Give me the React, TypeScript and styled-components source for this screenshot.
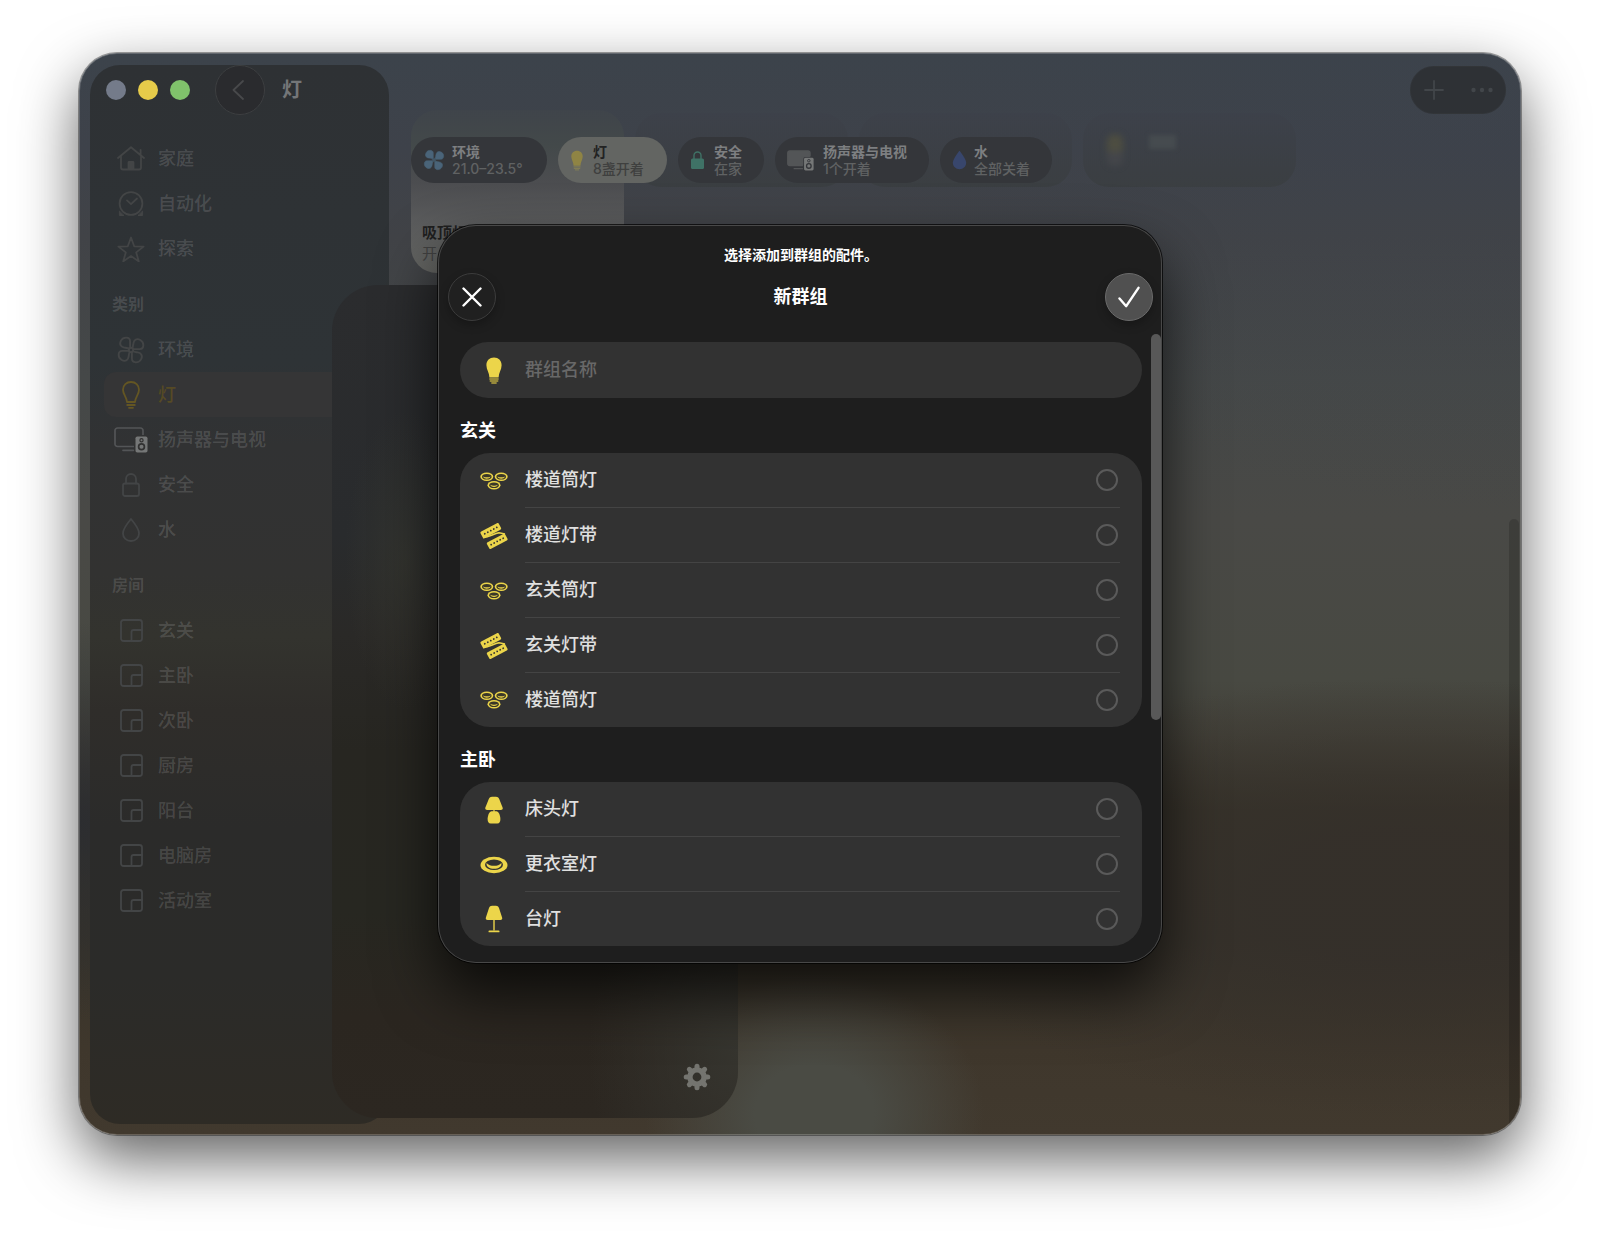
import React from "react";
import styled, { createGlobalStyle, css } from "styled-components";

const GlobalStyle = createGlobalStyle`
  * { box-sizing: border-box; }
  body {
    margin: 0;
    background: #ffffff;
    font-family: Inter, "Noto Sans CJK SC", sans-serif;
    -webkit-font-smoothing: antialiased;
  }
  button, input { font: inherit; color: inherit; }
  ul { list-style: none; margin: 0; padding: 0; }
`;

const YELLOW = "#ecd54a";

/* ---------- window ---------- */

const Page = styled.div`
  min-height: 100vh;
  padding: 53px 79px 104px;
  display: flex;
`;

const WindowShadow = styled.div`
  flex: 1;
  display: flex;
  border-radius: 38px;
  box-shadow:
    0 0 0 1px rgba(0, 0, 0, 0.35),
    0 24px 60px rgba(0, 0, 0, 0.62);
`;

const Window = styled.div`
  position: relative;
  flex: 1;
  display: flex;
  padding: 12px 0 11px 11px;
  border-radius: 38px;
  overflow: hidden;
  background:
    radial-gradient(ellipse 170px 140px at 51% 98%, #4a4b44 35%, rgba(74, 75, 68, 0) 100%),
    radial-gradient(ellipse 200px 200px at 0% 71%, rgba(42, 44, 49, 0.85), rgba(42, 44, 49, 0)),
    radial-gradient(ellipse 500px 220px at 92% 78%, rgba(52, 47, 42, 0.8) 30%, rgba(52, 47, 42, 0)),
    radial-gradient(ellipse 700px 460px at 100% 0%, rgba(60, 66, 76, 0.4), rgba(60, 66, 76, 0)),
    linear-gradient(
      180deg,
      #3c434b 0%,
      #3e424a 9%,
      #414347 17%,
      #454848 30%,
      #494946 43%,
      #484942 58%,
      #44423a 63%,
      #38342a 70%,
      #37332a 82%,
      #3f372c 92%,
      #41392e 100%
    );
`;

const WindowEdge = styled.div`
  position: absolute;
  inset: 0;
  border: 1px solid rgba(255, 255, 255, 0.2);
  border-radius: 38px;
  pointer-events: none;
`;

/* ---------- sidebar ---------- */

const Sidebar = styled.aside`
  flex: none;
  width: 299px;
  border-radius: 30px;
  background: linear-gradient(
    180deg,
    #2e3134 0%,
    #2e3336 28%,
    #313233 36%,
    #323231 48%,
    #33332e 54%,
    #2f2d2a 61%,
    #2b2b2a 72%,
    #2b2b29 86%,
    #2e2b25 100%
  );
`;

const TitleBar = styled.header`
  display: flex;
  align-items: center;
  height: 50px;
  padding-left: 16px;
  margin-bottom: 21px;
`;

const Lights = styled.div`
  display: flex;
  gap: 12px;
`;

const Light = styled.button<{ $color: string }>`
  width: 20px;
  height: 20px;
  padding: 0;
  border: 0;
  border-radius: 50%;
  background: ${(p) => p.$color};
`;

const BackButton = styled.button`
  display: grid;
  place-items: center;
  width: 50px;
  height: 50px;
  margin: 0 17px 0 25px;
  padding: 0 4px 0 0;
  border: 1px solid #3d3f41;
  border-radius: 50%;
  background: #2a2b2e;
  color: #48494b;
`;

const PageTitle = styled.h1`
  margin: 0;
  font-size: 20px;
  line-height: 24px;
  font-weight: 700;
  color: #747678;
`;

const NavHeading = styled.h2`
  margin: 0;
  padding: 21px 22px 11px;
  font-size: 16px;
  line-height: 24px;
  font-weight: 700;
  color: rgba(255, 255, 255, 0.13);
`;

const NavIcon = styled.span`
  display: grid;
  place-items: center;
  width: 34px;
  flex: none;
  color: #434546;
`;

const NavLink = styled.a<{ $active?: boolean }>`
  display: flex;
  align-items: center;
  gap: 10px;
  height: 45px;
  margin-left: 14px;
  padding-left: 10px;
  border-radius: 12px;
  font-size: 18px;
  line-height: 24px;
  font-weight: 500;
  text-decoration: none;
  color: rgba(255, 255, 255, 0.15);
  ${(p) =>
    p.$active &&
    css`
      background: #353536;
      color: #564a25;
      ${NavIcon} {
        color: #645623;
      }
    `}
`;

/* ---------- main area ---------- */

const Main = styled.main`
  flex: 1;
  min-width: 0;
  display: grid;
  grid-template-rows: 45px auto 1fr;
  padding-left: 22px;
`;

const Toolbar = styled.div`
  display: flex;
  justify-content: flex-end;
  align-items: flex-start;
  padding: 1px 15px 0 0;
`;

const ToolbarPill = styled.div`
  display: flex;
  height: 48px;
  border-radius: 24px;
  background: #2e3135;
  box-shadow: inset 0 0 0 1px rgba(255, 255, 255, 0.02);
`;

const ToolButton = styled.button`
  display: grid;
  place-items: center;
  width: 48px;
  height: 48px;
  padding: 0;
  border: 0;
  background: none;
  color: #42464a;
`;

const TileRow = styled.div`
  grid-area: 2 / 1;
  display: flex;
  align-items: flex-start;
  gap: 11px;
`;

const Tile = styled.article`
  display: flex;
  flex-direction: column;
  justify-content: flex-end;
  width: 213px;
  height: 163px;
  padding: 0 11px 9px;
  border-radius: 26px;
  background: linear-gradient(
    180deg,
    rgba(70, 75, 74, 0.2) 0%,
    #43494a 22%,
    #4c4d50 45%,
    #5a5b5c 68%,
    #656663 100%
  );
`;

const TileName = styled.h3`
  margin: 0;
  font-size: 15px;
  line-height: 21px;
  font-weight: 700;
  color: #1f1f1f;
`;

const TileState = styled.p`
  margin: 0;
  font-size: 15px;
  line-height: 21px;
  color: #414141;
`;

const GhostTile = styled.div`
  display: flex;
  align-items: center;
  gap: 26px;
  width: 213px;
  height: 74px;
  margin-top: 3px;
  padding-left: 24px;
  border-radius: 26px;
  background: linear-gradient(180deg, rgba(60, 62, 72, 0.3), rgba(56, 60, 61, 0.6));
`;

const GhostLamp = styled.span`
  width: 16px;
  height: 32px;
  border-radius: 8px;
  background: linear-gradient(180deg, #4d4d41 50%, #44464a 60%);
  filter: blur(3px);
`;

const GhostText = styled.span`
  width: 27px;
  height: 14px;
  margin-bottom: 16px;
  background: #464b4f;
  filter: blur(2px);
`;

const ChipRow = styled.div`
  grid-area: 2 / 1;
  align-self: start;
  z-index: 1;
  display: flex;
  gap: 11px;
  margin-top: 27px;
`;

const Chip = styled.button<{ $active?: boolean }>`
  display: flex;
  align-items: center;
  gap: 9px;
  height: 46px;
  padding: 0 22px 0 12px;
  border: 0;
  border-radius: 23px;
  text-align: left;
  white-space: nowrap;
  background: ${(p) => (p.$active ? "#636562" : "#34363a")};
  color: ${(p) => (p.$active ? "#3f403f" : "#606263")};
  font-size: 14px;
  line-height: 17px;
  font-weight: 500;
`;

const ChipIcon = styled.span<{ $width: number; $color: string }>`
  display: grid;
  place-items: center;
  width: ${(p) => p.$width}px;
  color: ${(p) => p.$color};
`;

const ChipText = styled.span<{ $width: number }>`
  display: grid;
  min-width: ${(p) => p.$width}px;
`;

const ChipTitle = styled.strong<{ $active?: boolean }>`
  font-weight: 700;
  color: ${(p) => (p.$active ? "#222222" : "#7d7f81")};
`;

const WindowScrollThumb = styled.div`
  position: absolute;
  right: 2px;
  top: 466px;
  bottom: 0;
  width: 10px;
  border-radius: 5px 5px 0 0;
  background: rgba(0, 0, 0, 0.16);
`;

/* ---------- panel behind the dialog ---------- */

const BackPanel = styled.section`
  position: absolute;
  left: 253px;
  top: 232px;
  bottom: 17px;
  width: 406px;
  display: flex;
  justify-content: flex-end;
  align-items: flex-end;
  padding: 27px;
  border-radius: 46px;
  background:
    radial-gradient(ellipse 150px 200px at 100% 92%, #36352f, rgba(54, 53, 47, 0)),
    radial-gradient(ellipse 60px 150px at 18% 33%, rgba(60, 60, 50, 0.5), rgba(60, 60, 50, 0)),
    linear-gradient(180deg, #2b2c2e 0%, #292b2d 30%, #2a2927 42%, #272621 56%, #272721 75%, #2b2620 88%, #2c2721 100%);
`;

const GearButton = styled.button`
  padding: 0;
  border: 0;
  background: none;
  color: #74746f;
  line-height: 0;
`;

/* ---------- dialog ---------- */

const DialogLayer = styled.div`
  position: absolute;
  inset: 172px 0 0;
  display: flex;
  justify-content: center;
  align-items: flex-start;
`;

const Dialog = styled.form`
  position: relative;
  width: 724px;
  border-radius: 38px;
  padding: 20px 20px 17px 22px;
  background: #1e1e1e;
  color: #ffffff;
  box-shadow:
    inset 0 0 0 1px #484848,
    0 0 0 1px rgba(0, 0, 0, 0.7),
    0 30px 60px rgba(0, 0, 0, 0.72);
`;

const DialogHint = styled.p`
  margin: 0;
  text-align: center;
  font-size: 14px;
  line-height: 20px;
  font-weight: 700;
`;

const DialogHeader = styled.div`
  display: flex;
  align-items: center;
  justify-content: space-between;
  height: 48px;
  margin: 8px -11px 21px -12px;
`;

const DialogTitle = styled.h2`
  margin: 0;
  font-size: 18px;
  line-height: 24px;
  font-weight: 700;
`;

const RoundButton = styled.button<{ $filled?: boolean }>`
  display: grid;
  place-items: center;
  width: 48px;
  height: 48px;
  padding: 0;
  border: 1px solid ${(p) => (p.$filled ? "#6a6a6a" : "#3c3c3c")};
  border-radius: 50%;
  background: ${(p) => (p.$filled ? "#505050" : "#202020")};
  color: #ffffff;
  box-shadow: 0 4px 10px rgba(0, 0, 0, 0.25);
`;

const rowBase = css`
  display: flex;
  align-items: center;
  gap: 17px;
  padding-left: 20px;
  font-size: 18px;
  line-height: 24px;
  font-weight: 500;
`;

const RowIcon = styled.span`
  display: grid;
  place-items: center;
  width: 28px;
  flex: none;
  color: ${YELLOW};
`;

const NameField = styled.label`
  ${rowBase}
  height: 56px;
  padding-right: 22px;
  border-radius: 28px;
  background: #323232;
`;

const NameInput = styled.input`
  flex: 1;
  min-width: 0;
  padding: 0;
  border: 0;
  outline: 0;
  background: none;
  &::placeholder {
    color: #686868;
    opacity: 1;
  }
`;

const GroupTitle = styled.h3`
  margin: 21px 0 10px;
  font-size: 18px;
  line-height: 24px;
  font-weight: 700;
`;

const Card = styled.ul`
  border-radius: 30px;
  background: #323232;
`;

const Row = styled.label`
  ${rowBase}
  padding-right: 22px;
  color: #e0e0e0;
`;

const RowBody = styled.span`
  flex: 1;
  display: flex;
  align-items: center;
  justify-content: space-between;
  height: 55px;
  padding-right: 2px;
  border-bottom: 1px solid #444444;
  li:last-child & {
    height: 54px;
    border-bottom: 0;
  }
`;

const RoundCheck = styled.input`
  appearance: none;
  width: 22px;
  height: 22px;
  margin: 0;
  border: 2px solid #5a5a5a;
  border-radius: 50%;
  &:checked {
    border-color: ${YELLOW};
    background: ${YELLOW};
  }
`;

const DialogScrollThumb = styled.div`
  position: absolute;
  right: 1px;
  top: 109px;
  width: 10px;
  height: 386px;
  border-radius: 5px;
  background: #585858;
`;

/* ---------- icons ---------- */

const line = {
  fill: "none",
  stroke: "currentColor",
  strokeWidth: 1.8,
  strokeLinecap: "round" as const,
  strokeLinejoin: "round" as const,
};

const HouseIcon = () => (
  <svg width="28" height="25" viewBox="0 0 28 25" {...line}>
    <path d="M1 12 14 1.2 27 12M4 10v11.500a2 2 0 0 0 2 2h16a2 2 0 0 0 2-2V10M23.600 8.600V3.800" />
    <path d="M11.500 23v-6.500a.5.5 0 0 1 .5-.5h4a.5.5 0 0 1 .5.5V23z" fill="currentColor" />
  </svg>
);

const ClockIcon = () => (
  <svg width="26" height="26" viewBox="0 0 26 26" {...line}>
    <circle cx="13" cy="12.500" r="11.400" />
    <path d="m9 9.400 4 3.700 6-5.600" />
    <path d="M1.400 20.500v4h4.200zM24.600 20.500v4h-4.200z" fill="currentColor" strokeWidth="1" />
  </svg>
);

const StarIcon = () => (
  <svg width="28" height="26" viewBox="0 0 28 26" {...line}>
    <path d="m14 1.500 3.200 8.800 9.400.3-7.400 5.800 2.600 9L14 20.100l-7.800 5.300 2.600-9-7.400-5.800 9.400-.3z" />
  </svg>
);

const BLADE = "M11.200 10.400V4.400C11.200.6 5.400.4 3.400 4 1.400 7.600 4 9.600 6.200 9.900c1.800.3 3.200.4 4.200 1z";

const FanIcon = ({ size, filled }: { size: number; filled?: boolean }) => (
  <svg
    width={size}
    height={size}
    viewBox="0 0 24 24"
    fill={filled ? "currentColor" : "none"}
    stroke="currentColor"
    strokeWidth={filled ? 0.6 : 1.6}
    strokeLinejoin="round"
  >
    {[0, 90, 180, 270].map((a) => (
      <path key={a} d={BLADE} transform={`rotate(${a} 12 12)`} />
    ))}
    <circle cx="12" cy="12" r="1.9" fill={filled ? "#34363a" : "none"} />
    {filled && <circle cx="12" cy="12" r="0.9" />}
  </svg>
);

const BulbOutlineIcon = () => (
  <svg width="18" height="28" viewBox="0 0 18 28" {...line}>
    <path d="M5 21C4.600 15.500 1 13.500 1 8.800 1 4.200 4.500 1 9 1s8 3.200 8 7.800c0 4.700-3.600 6.700-4 12.200z" />
    <path d="M5.200 24h7.600M7 26.800h4" />
  </svg>
);

const BulbIcon = ({ height, base }: { height: number; base: string }) => (
  <svg width={Math.round((height * 16) / 27)} height={height} viewBox="0 0 16 27">
    <path
      d="M3.400 20.500C3.400 16 .4 12.600.4 8.200.4 3.600 3.600.6 8 .6s7.600 3 7.600 7.600c0 4.400-3 7.800-3 12.300z"
      fill="currentColor"
    />
    <path d="M3.800 22h8.400M4.200 24h7.600M5.800 26h4.400" stroke={base} strokeWidth="1.300" strokeLinecap="round" />
  </svg>
);

const MediaIcon = ({ width, filled, hole }: { width: number; filled?: boolean; hole: string }) => (
  <svg width={width} height={Math.round((width * 26) / 34)} viewBox="0 0 34 26" fill="none">
    <path
      d="M20 19.500H3.500A2.500 2.500 0 0 1 1 17V3.500A2.500 2.500 0 0 1 3.500 1h23A2.500 2.500 0 0 1 29 3.500V8"
      stroke="#535557"
      strokeWidth="1.700"
      fill={filled ? "#535557" : "none"}
    />
    {filled && <path d="M18 8h11v8H18z" fill="#535557" />}
    <path d="M9 23.300h10.500" stroke="#535557" strokeWidth="1.700" strokeLinecap="round" />
    <rect x="20.500" y="8.500" width="13.500" height="17.500" rx="2.600" fill={hole} />
    <rect x="21.500" y="9.500" width="12" height="16" rx="1.800" fill="#757777" />
    <circle cx="27.500" cy="13.300" r="1.600" stroke={hole} strokeWidth="1.200" />
    <circle cx="27.500" cy="19.800" r="2.900" stroke={hole} strokeWidth="1.700" />
  </svg>
);

const LockOutlineIcon = () => (
  <svg width="18" height="24" viewBox="0 0 18 24" {...line}>
    <rect x="1" y="10.500" width="16" height="12.500" rx="2" />
    <path d="M4 10.500V6a5 5 0 0 1 10 0v4.500" />
  </svg>
);

const LockIcon = () => (
  <svg width="13" height="18" viewBox="0 0 13 18">
    <rect x="0" y="7.500" width="13" height="10.500" rx="1.500" fill="currentColor" />
    <path d="M3 8V4.500a3.500 3.500 0 0 1 7 0V8" fill="none" stroke="currentColor" strokeWidth="1.400" />
  </svg>
);

const DROP = "M9 1C9 1 1 10.500 1 15.400 1 20 4.500 23 9 23s8-3 8-7.600C17 10.500 9 1 9 1z";

const DropOutlineIcon = () => (
  <svg width="18" height="24" viewBox="0 0 18 24" {...line}>
    <path d={DROP} />
  </svg>
);

const DropIcon = () => (
  <svg width="15" height="20" viewBox="0 0 18 24">
    <path d={DROP} fill="currentColor" />
  </svg>
);

const RoomIcon = () => (
  <svg width="23" height="23" viewBox="0 0 23 23" {...line}>
    <rect x="1" y="1" width="21" height="21" rx="2.500" />
    <path d="M11.500 22v-9a2 2 0 0 1 2-2H22" />
  </svg>
);

const Ring = ({ x, y }: { x: number; y: number }) => (
  <g transform={`translate(${x} ${y})`}>
    <ellipse rx="6.500" ry="4.200" fill={YELLOW} />
    <ellipse rx="4.800" ry="2.800" fill="#3a3728" />
    <path d="M-3.800-.4C-2.600 2.600 2.600 2.600 3.800-.4 1.800.8-1.800.8-3.800-.4z" fill={YELLOW} />
  </g>
);

const DownlightsIcon = () => (
  <svg width="28" height="18" viewBox="0 0 28 18">
    <Ring x={6.8} y={4.8} />
    <Ring x={21.2} y={4.8} />
    <Ring x={14} y={13.2} />
  </svg>
);

const Strip = ({ x, y }: { x: number; y: number }) => (
  <g transform={`translate(${x} ${y}) rotate(-28)`}>
    <rect x="-10.300" y="-3.700" width="20.600" height="7.400" rx="1.400" fill={YELLOW} />
    {[-6.8, -3.4, 0, 3.4, 6.8].map((dx) => (
      <circle key={dx} cx={dx} cy="0" r="0.9" fill="#323232" />
    ))}
  </g>
);

const LightStripIcon = () => (
  <svg width="28" height="26" viewBox="0 0 28 26">
    <Strip x={10.8} y={7.6} />
    <path d="M3 14.600c7-.8 10-3.600 16-4.800l6 1.200" stroke={YELLOW} strokeWidth="1.600" fill="none" />
    <Strip x={17.2} y={18.4} />
  </svg>
);

const BedsideLampIcon = () => (
  <svg width="18" height="28" viewBox="0 0 18 28" fill={YELLOW}>
    <path d="M7 .8h4c1.500 0 2.500.8 3.200 2.300l3.400 8.400c.5 1.400-.2 2.400-1.700 2.400H2.100C.6 13.900-.1 12.900.4 11.500l3.400-8.400C4.500 1.600 5.500.8 7 .8z" />
    <path d="M8.400 13h1.200v3H8.400z" />
    <path d="M6.600 15.200h4.800c2.200 0 4 4.400 4 7.800 0 3-1 4.400-3 4.400H5.600c-2 0-3-1.400-3-4.400 0-3.400 1.800-7.800 4-7.800z" />
  </svg>
);

const CeilingLampIcon = () => (
  <svg width="28" height="18" viewBox="0 0 28 18">
    <ellipse cx="14" cy="9" rx="13.500" ry="8.300" fill={YELLOW} />
    <ellipse cx="14" cy="8.700" rx="9" ry="5.300" fill="#323232" />
    <path d="M6.600 7C8.300 9.200 11 9.800 14 9.800s5.700-.6 7.400-2.800c.8 3.600-3.200 5.800-7.400 5.800S5.800 10.600 6.600 7z" fill={YELLOW} />
  </svg>
);

const TableLampIcon = () => (
  <svg width="18" height="28" viewBox="0 0 18 28" fill={YELLOW}>
    <path d="M7 .8h4c1.400 0 2.400.8 3 2.200l3.100 9.400c.5 1.400-.2 2.500-1.700 2.500H2.600c-1.500 0-2.200-1.100-1.700-2.500L4 3C4.600 1.600 5.600.8 7 .8z" />
    <path d="M8.300 14.500h1.400v11H8.300z" />
    <rect x="3.500" y="25.400" width="11" height="1.900" rx="0.900" />
  </svg>
);

const GearIcon = () => (
  <svg width="28" height="28" viewBox="0 0 28 28" fill="none" stroke="currentColor">
    <circle cx="14" cy="14" r="7.100" strokeWidth="5.400" />
    {[0, 45, 90, 135, 180, 225, 270, 315].map((a) => (
      <path key={a} d="M14 5V3.200" strokeWidth="5" strokeLinecap="round" transform={`rotate(${a} 14 14)`} />
    ))}
  </svg>
);

/* ---------- data ---------- */

type NavItem = { label: string; icon: React.ReactNode; active?: boolean };

const topItems: NavItem[] = [
  { label: "家庭", icon: <HouseIcon /> },
  { label: "自动化", icon: <ClockIcon /> },
  { label: "探索", icon: <StarIcon /> },
];

const categories: NavItem[] = [
  { label: "环境", icon: <FanIcon size={28} /> },
  { label: "灯", icon: <BulbOutlineIcon />, active: true },
  { label: "扬声器与电视", icon: <MediaIcon width={34} hole="#323232" /> },
  { label: "安全", icon: <LockOutlineIcon /> },
  { label: "水", icon: <DropOutlineIcon /> },
];

const rooms: NavItem[] = ["玄关", "主卧", "次卧", "厨房", "阳台", "电脑房", "活动室"].map((label) => ({
  label,
  icon: <RoomIcon />,
}));

const chips = [
  { title: "环境", state: "21.0–23.5°", width: 20, text: 73, color: "#4a6479", icon: <FanIcon size={22} filled /> },
  {
    title: "灯",
    state: "8盏开着",
    width: 14,
    text: 52,
    color: "#8f8444",
    icon: <BulbIcon height={21} base="#858154" />,
    active: true,
  },
  { title: "安全", state: "在家", width: 15, text: 28, color: "#3f7266", icon: <LockIcon /> },
  {
    title: "扬声器与电视",
    state: "1个开着",
    width: 27,
    text: 84,
    color: "#535557",
    icon: <MediaIcon width={27} filled hole="#34363a" />,
  },
  { title: "水", state: "全部关着", width: 13, text: 56, color: "#38466c", icon: <DropIcon /> },
];

const groups = [
  {
    name: "玄关",
    items: [
      { label: "楼道筒灯", icon: <DownlightsIcon /> },
      { label: "楼道灯带", icon: <LightStripIcon /> },
      { label: "玄关筒灯", icon: <DownlightsIcon /> },
      { label: "玄关灯带", icon: <LightStripIcon /> },
      { label: "楼道筒灯", icon: <DownlightsIcon /> },
    ],
  },
  {
    name: "主卧",
    items: [
      { label: "床头灯", icon: <BedsideLampIcon /> },
      { label: "更衣室灯", icon: <CeilingLampIcon /> },
      { label: "台灯", icon: <TableLampIcon /> },
    ],
  },
];

const NavList = ({ items }: { items: NavItem[] }) => (
  <ul>
    {items.map((item) => (
      <li key={item.label}>
        <NavLink href="#" $active={item.active}>
          <NavIcon>{item.icon}</NavIcon>
          {item.label}
        </NavLink>
      </li>
    ))}
  </ul>
);

export default function App() {
  return (
    <Page>
      <GlobalStyle />
      <WindowShadow>
        <Window>
          <Sidebar>
            <TitleBar>
              <Lights>
                <Light type="button" $color="#747b8a" />
                <Light type="button" $color="#e6cb4a" />
                <Light type="button" $color="#80c26b" />
              </Lights>
              <BackButton type="button">
                <svg width="12" height="20" viewBox="0 0 12 20" {...line}>
                  <path d="M11 1 1.500 10l9.500 9" />
                </svg>
              </BackButton>
              <PageTitle>灯</PageTitle>
            </TitleBar>
            <nav>
              <NavList items={topItems} />
              <NavHeading>类别</NavHeading>
              <NavList items={categories} />
              <NavHeading>房间</NavHeading>
              <NavList items={rooms} />
            </nav>
          </Sidebar>

          <Main>
            <Toolbar>
              <ToolbarPill>
                <ToolButton type="button">
                  <svg width="20" height="20" viewBox="0 0 20 20" {...line}>
                    <path d="M10 1v18M1 10h18" />
                  </svg>
                </ToolButton>
                <ToolButton type="button">
                  <svg width="22" height="6" viewBox="0 0 22 6" fill="currentColor">
                    <circle cx="2.500" cy="3" r="2.200" />
                    <circle cx="11" cy="3" r="2.200" />
                    <circle cx="19.500" cy="3" r="2.200" />
                  </svg>
                </ToolButton>
              </ToolbarPill>
            </Toolbar>
            <TileRow>
              <Tile>
                <TileName>吸顶灯</TileName>
                <TileState>开</TileState>
              </Tile>
              <GhostTile />
              <GhostTile />
              <GhostTile>
                <GhostLamp />
                <GhostText />
              </GhostTile>
            </TileRow>
            <ChipRow>
              {chips.map((chip) => (
                <Chip key={chip.title} type="button" $active={chip.active}>
                  <ChipIcon $width={chip.width} $color={chip.color}>
                    {chip.icon}
                  </ChipIcon>
                  <ChipText $width={chip.text}>
                    <ChipTitle $active={chip.active}>{chip.title}</ChipTitle>
                    <span>{chip.state}</span>
                  </ChipText>
                </Chip>
              ))}
            </ChipRow>
          </Main>

          <WindowScrollThumb />

          <BackPanel>
            <GearButton type="button">
              <GearIcon />
            </GearButton>
          </BackPanel>

          <DialogLayer>
            <Dialog role="dialog">
              <DialogHint>选择添加到群组的配件。</DialogHint>
              <DialogHeader>
                <RoundButton type="button">
                  <svg width="20" height="20" viewBox="0 0 20 20" {...line} strokeWidth="2.400">
                    <path d="m1.500 1.500 17 17M18.500 1.500l-17 17" />
                  </svg>
                </RoundButton>
                <DialogTitle>新群组</DialogTitle>
                <RoundButton type="submit" $filled>
                  <svg width="22" height="22" viewBox="0 0 22 22" {...line} strokeWidth="2.400">
                    <path d="m1.500 12.500 6.700 7.700L20.500 1.800" />
                  </svg>
                </RoundButton>
              </DialogHeader>
              <NameField>
                <RowIcon>
                  <BulbIcon height={27} base="#b8a73f" />
                </RowIcon>
                <NameInput type="text" placeholder="群组名称" />
              </NameField>
              {groups.map((group) => (
                <section key={group.name}>
                  <GroupTitle>{group.name}</GroupTitle>
                  <Card>
                    {group.items.map((item, i) => (
                      <li key={i}>
                        <Row>
                          <RowIcon>{item.icon}</RowIcon>
                          <RowBody>
                            {item.label}
                            <RoundCheck type="checkbox" />
                          </RowBody>
                        </Row>
                      </li>
                    ))}
                  </Card>
                </section>
              ))}
              <DialogScrollThumb />
            </Dialog>
          </DialogLayer>
          <WindowEdge />
        </Window>
      </WindowShadow>
    </Page>
  );
}
